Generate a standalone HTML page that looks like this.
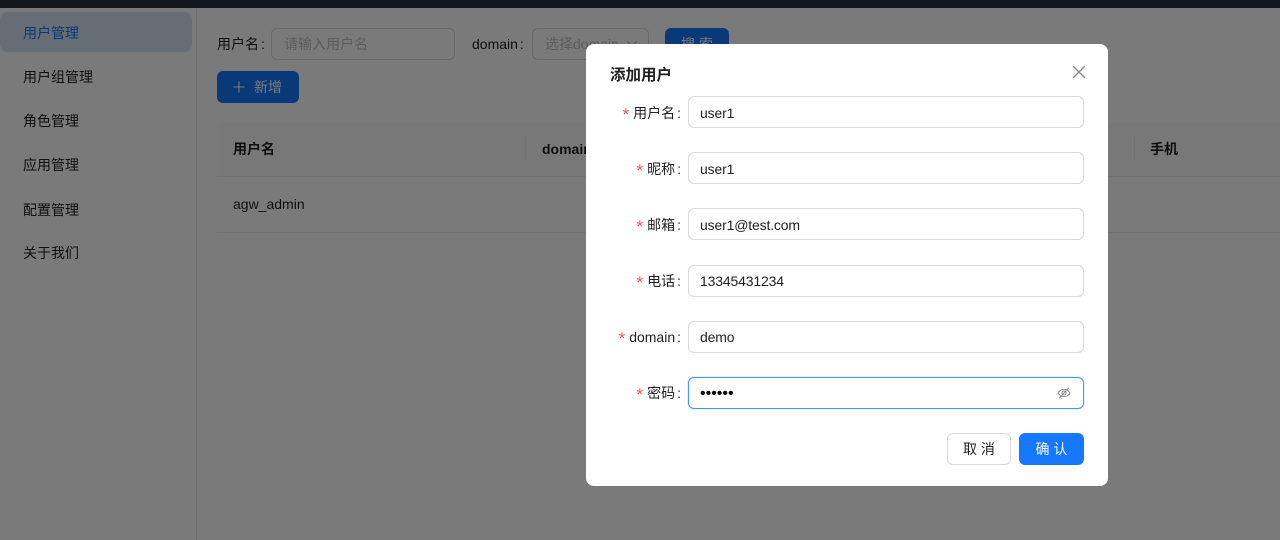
<!DOCTYPE html>
<html lang="zh">
<head>
<meta charset="utf-8">
<title>用户管理</title>
<style>
*{box-sizing:border-box}
html,body{margin:0;padding:0;width:1280px;height:540px;overflow:hidden;background:#fff;font-family:"Liberation Sans","Noto Sans CJK SC",sans-serif;font-size:14px;color:rgba(0,0,0,.88)}
.abs{position:absolute;white-space:nowrap;line-height:22px}
.top{position:absolute;left:0;top:0;width:1280px;height:8px;background:#15171f;z-index:20}
.side{position:absolute;left:0;top:8px;width:197px;height:532px;background:#fff;border-right:1px solid #eee}
.sel{position:absolute;left:0;top:12px;width:192px;height:40px;border-radius:8px;background:#d6e4f2}
.inp{position:absolute;height:32px;border:1px solid #d9d9d9;border-radius:6px;background:#fff;line-height:30px;padding-left:12px;white-space:nowrap;overflow:hidden}
.ph{color:rgba(0,0,0,.25)}
.btn{position:absolute;background:#1677ff;color:#fff;border-radius:6px;text-align:center;height:32px;line-height:32px;white-space:nowrap}
.thead{position:absolute;left:217px;top:122px;width:1063px;height:55px;background:#fafafa;border-bottom:1px solid #f0f0f0;border-radius:8px 0 0 0}
.rowl{position:absolute;left:217px;top:232px;width:1063px;height:1px;background:#f0f0f0}
.th{font-weight:700}
.sep{position:absolute;top:136px;width:1px;height:26px;background:#f0f0f0}
.mask{position:absolute;left:0;top:8px;width:1280px;height:532px;background:rgba(0,0,0,.52);z-index:5}
.modal{position:absolute;left:586px;top:44px;width:522px;height:442px;background:#fff;border-radius:8px;z-index:10}
.lbl{position:absolute;right:427px;white-space:nowrap;line-height:22px;text-align:right;color:rgba(0,0,0,.88)}
.lbl i{font-style:normal;color:#ff4d4f;margin-right:4px;font-size:17px;line-height:0;vertical-align:-2px;font-family:"Liberation Sans",sans-serif}
.c{margin-left:2px}
.m{position:absolute;left:102px;width:396px;height:32px;border:1px solid #d9d9d9;border-radius:6px;line-height:30px;padding-left:11px;white-space:nowrap;background:#fff;letter-spacing:-.16px}
</style>
</head>
<body>
<div class="top"></div>
<div class="side"></div>
<div class="sel"></div>
<div class="abs" style="left:23px;top:22px;color:#1677ff">用户管理</div>
<div class="abs" style="left:23px;top:66px">用户组管理</div>
<div class="abs" style="left:23px;top:110px">角色管理</div>
<div class="abs" style="left:23px;top:154px">应用管理</div>
<div class="abs" style="left:23px;top:199px">配置管理</div>
<div class="abs" style="left:23px;top:242px">关于我们</div>

<div class="abs" style="left:217px;top:33px">用户名<span class="c">:</span></div>
<div class="inp ph" style="left:271px;top:28px;width:184px">请输入用户名</div>
<div class="abs" style="left:472px;top:33px">domain<span class="c">:</span></div>
<div class="inp ph" style="left:532px;top:28px;width:117px">选择domain</div>
<svg width="12" height="8" viewBox="0 0 12 8" style="position:absolute;left:626px;top:40px"><path d="M1 1L6 7L11 1" stroke="#bfbfbf" stroke-width="1.200" fill="none"/></svg>
<div class="btn" style="left:665px;top:28px;width:64px">搜 索</div>
<div class="btn" style="left:217px;top:71px;width:82px">
<svg width="14" height="14" viewBox="0 0 14 14" style="position:absolute;left:15px;top:9px"><path d="M7 1.500V12.500M1.500 7H12.500" stroke="#fff" stroke-width="1.100" fill="none"/></svg>
<span style="position:absolute;left:37px;top:0">新增</span></div>

<div class="thead"></div>
<div class="sep" style="left:525px"></div>
<div class="sep" style="left:1134px"></div>
<div class="abs th" style="left:233px;top:138px">用户名</div>
<div class="abs th" style="left:542px;top:138px">domain</div>
<div class="abs th" style="left:1150px;top:138px">手机</div>
<div class="abs" style="left:233px;top:193px">agw_admin</div>
<div class="rowl"></div>

<div class="mask"></div>

<div class="modal">
  <div class="abs" style="left:24px;top:21px;font-size:15.500px;font-weight:700">添加用户</div>
  <svg width="16" height="16" viewBox="0 0 16 16" style="position:absolute;left:485px;top:20px"><path d="M2 2L14 14M14 2L2 14" stroke="#8a8a8a" stroke-width="1.300" fill="none"/></svg>

  <div class="lbl" style="top:58px"><i>*</i>用户名<span class="c">:</span></div>
  <div class="m" style="top:52px;line-height:32px">user1</div>
  <div class="lbl" style="top:114px"><i>*</i>昵称<span class="c">:</span></div>
  <div class="m" style="top:108px;line-height:32px">user1</div>
  <div class="lbl" style="top:170px"><i>*</i>邮箱<span class="c">:</span></div>
  <div class="m" style="top:164px;line-height:32px">user1@test.com</div>
  <div class="lbl" style="top:226px"><i>*</i>电话<span class="c">:</span></div>
  <div class="m" style="top:221px">13345431234</div>
  <div class="lbl" style="top:282px"><i>*</i>domain<span class="c">:</span></div>
  <div class="m" style="top:277px">demo</div>
  <div class="lbl" style="top:338px"><i>*</i>密码<span class="c">:</span></div>
  <div class="m" style="top:333px;border-color:#4096ff;box-shadow:0 0 0 1px rgba(5,145,255,.1);color:#000;letter-spacing:0;font-size:16px;line-height:32px">••••••
    <svg width="14" height="14" viewBox="0 0 16 16" style="position:absolute;left:368px;top:8px"><path d="M1 8C3 5 5.300 3.800 8 3.800S13 5 15 8C13 11 10.700 12.200 8 12.200S3 11 1 8Z" stroke="#8c8c8c" stroke-width="1.100" fill="none"/><circle cx="8" cy="8" r="2.300" stroke="#8c8c8c" stroke-width="1.100" fill="none"/><path d="M2.500 14L13.500 2" stroke="#8c8c8c" stroke-width="1.100"/></svg>
  </div>

  <div class="btn" style="left:361px;top:389px;width:64px;background:#fff;color:rgba(0,0,0,.88);border:1px solid #d9d9d9;line-height:30px">取 消</div>
  <div class="btn" style="left:433px;top:389px;width:65px">确 认</div>
</div>
</body>
</html>
